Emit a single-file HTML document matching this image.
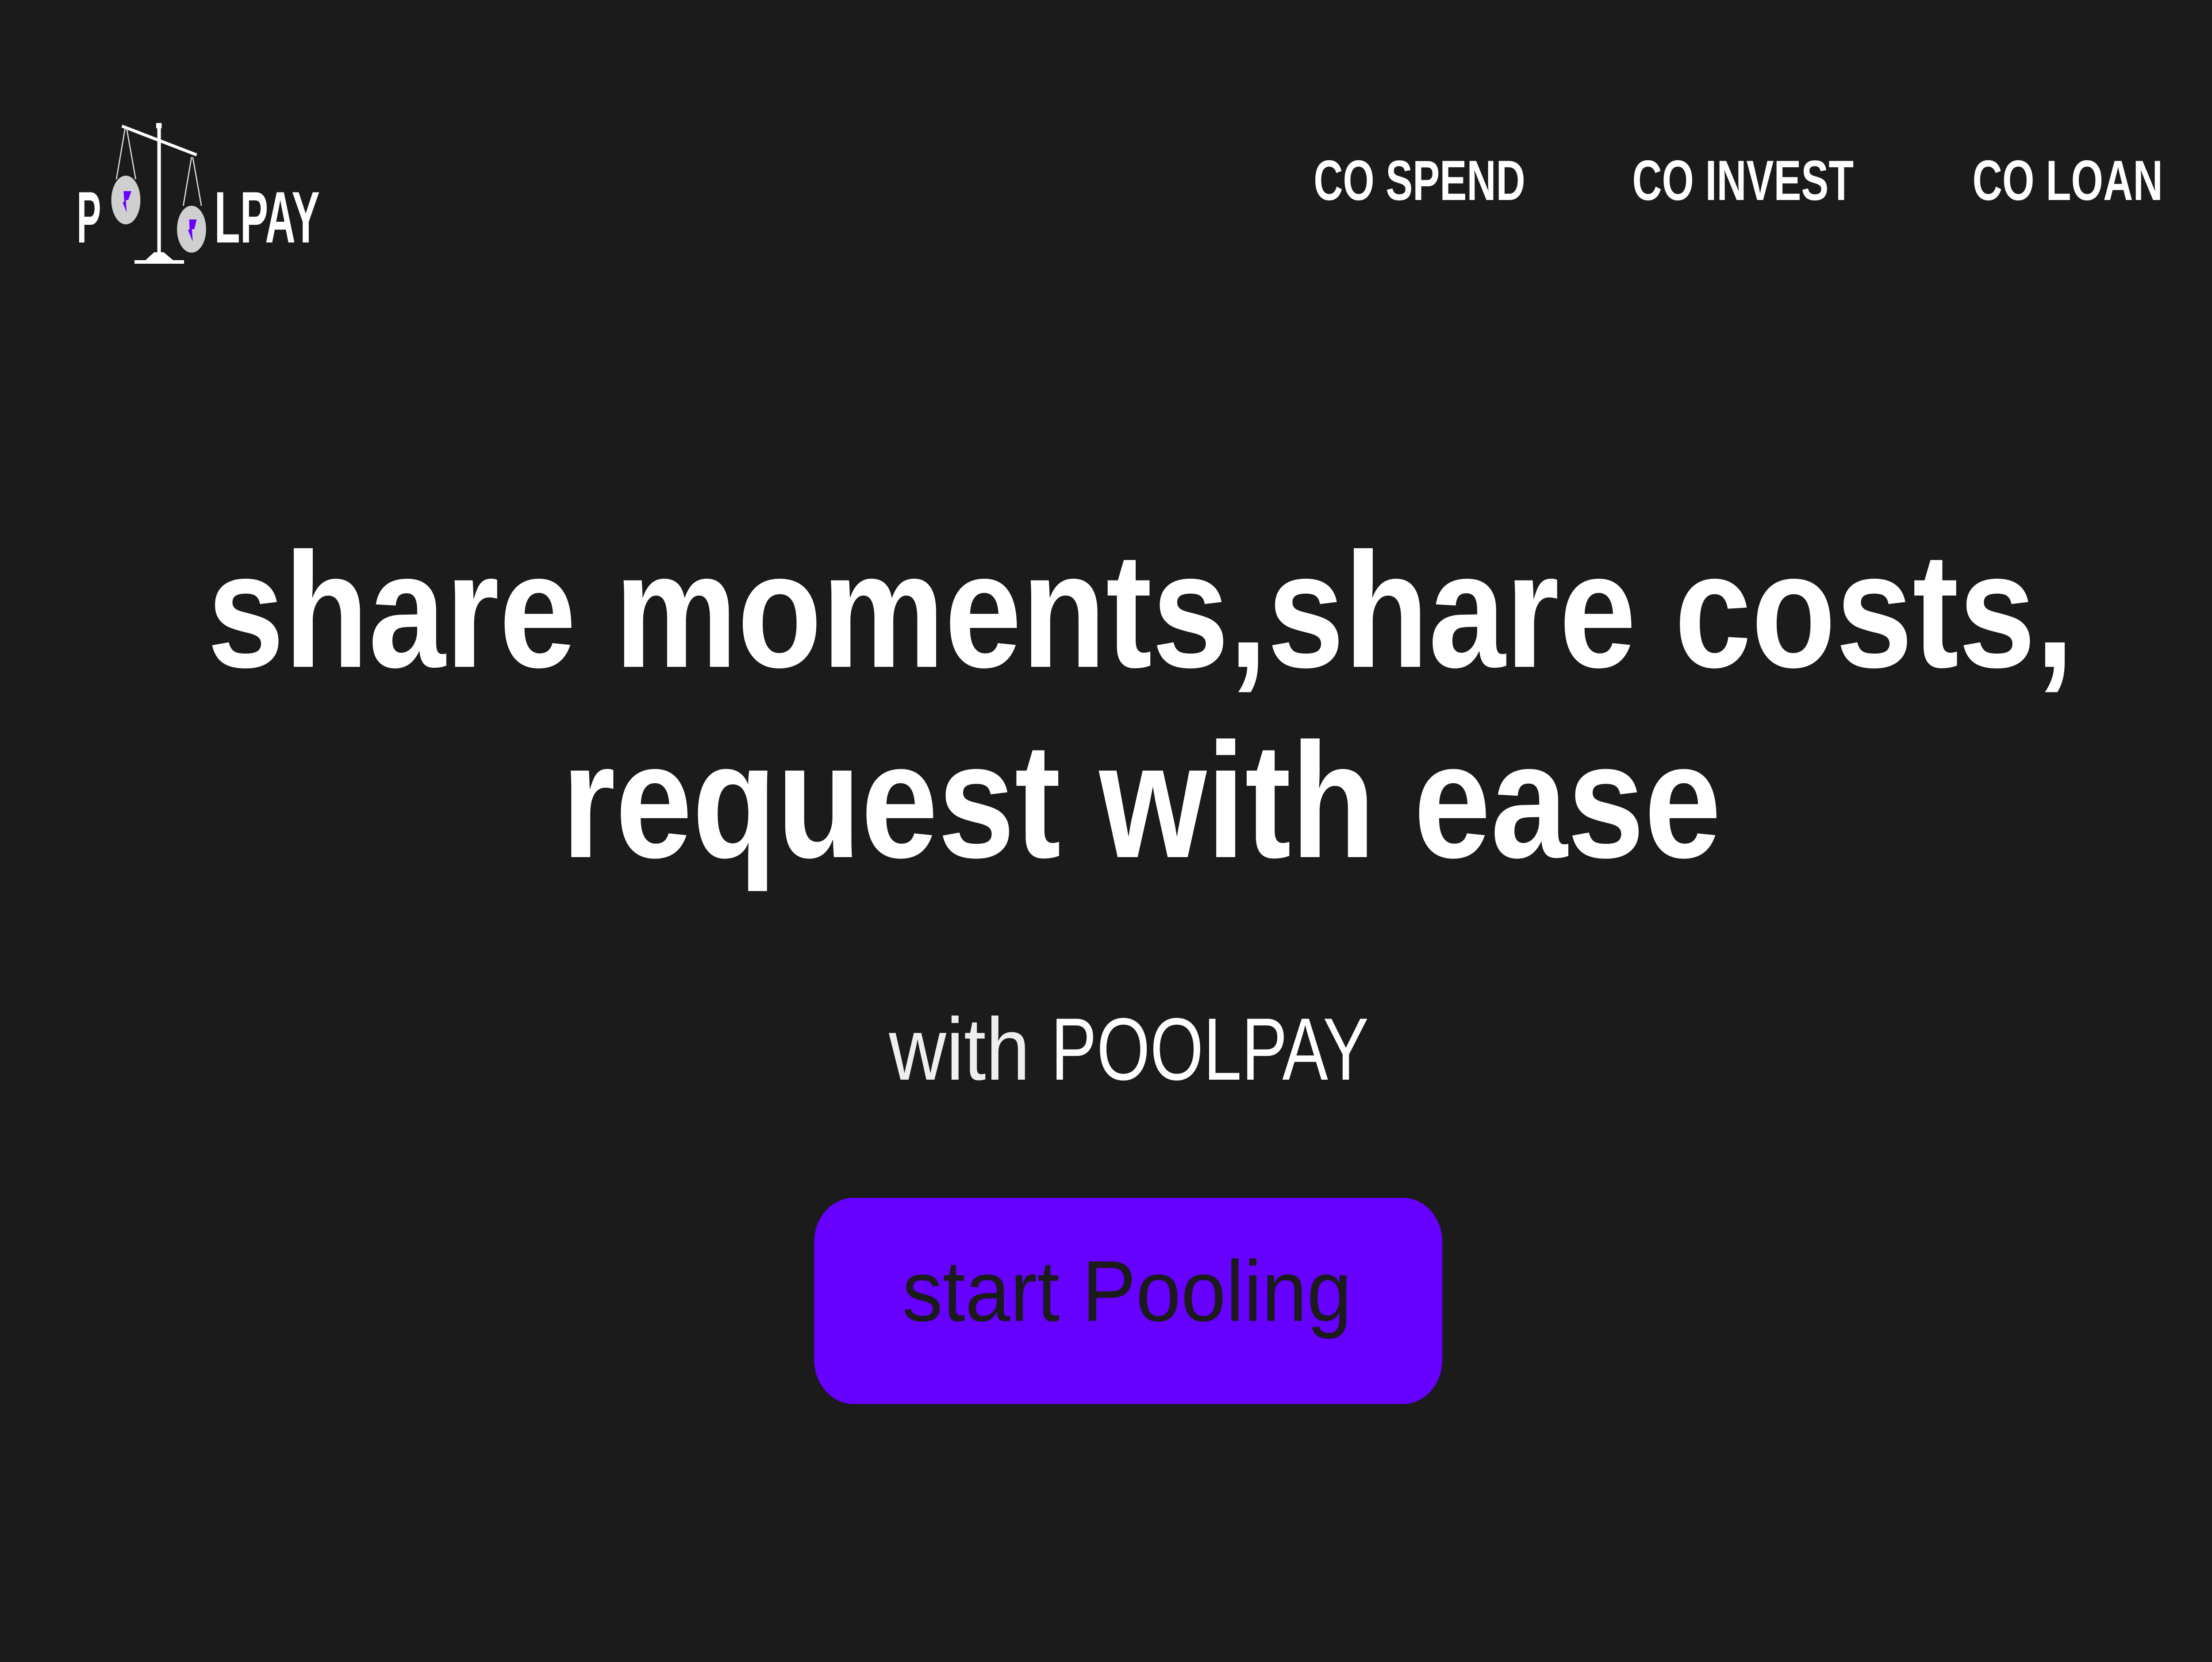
<!DOCTYPE html>
<html><head><meta charset="utf-8"><style>
html,body{margin:0;padding:0;background:#1b1b1b;overflow:hidden;width:100%;height:100%;}
svg{display:block;width:100vw;height:100vh;}
</style></head><body>
<svg viewBox="0 0 5624 3756" preserveAspectRatio="none" xmlns="http://www.w3.org/2000/svg" font-family="'Liberation Sans', sans-serif">
<rect width="5624" height="3756" fill="#1b1b1b"/>
<g fill="#fff">
<text x="195" y="548" font-size="165" font-weight="700" textLength="62" lengthAdjust="spacingAndGlyphs">P</text>
<text x="545" y="548" font-size="165" font-weight="700" textLength="268" lengthAdjust="spacingAndGlyphs">LPAY</text>
</g>
<g stroke="#ddd" fill="none">
<line x1="310" y1="285" x2="500" y2="350" stroke-width="7" stroke="#fff"/>
<line x1="318" y1="290" x2="296" y2="405" stroke-width="3"/>
<line x1="322" y1="290" x2="345" y2="405" stroke-width="3"/>
<line x1="487" y1="355" x2="466" y2="465" stroke-width="3"/>
<line x1="490" y1="355" x2="512" y2="465" stroke-width="3"/>
</g>
<rect x="400" y="282" width="9" height="300" fill="#fff"/>
<rect x="397" y="278" width="14" height="12" fill="#fff"/>
<path d="M392 570 L416 570 L440 588 L468 588 L468 596 L342 596 L342 588 L370 588 Z" fill="#fff"/>
<ellipse cx="320" cy="452" rx="37" ry="55" fill="#cfcfcf"/>
<ellipse cx="487" cy="518" rx="37" ry="53" fill="#cfcfcf"/>
<path d="M314 432 L334 432 L326 452 L320 452 L322 480 L312 458 L316 455 Z" fill="#6a00ff"/>
<path d="M481 496 L500 496 L494 518 L488 518 L490 546 L478 520 L482 518 Z" fill="#6a00ff"/>
<g fill="#fff" font-size="128" font-weight="700">
<text x="3340" y="452" textLength="538" lengthAdjust="spacingAndGlyphs">CO SPEND</text>
<text x="4150" y="452" textLength="563" lengthAdjust="spacingAndGlyphs">CO INVEST</text>
<text x="5015" y="452" textLength="484" lengthAdjust="spacingAndGlyphs">CO LOAN</text>
</g>
<g fill="#fff" font-size="370" font-weight="700">
<text x="527" y="1507" textLength="4746" lengthAdjust="spacingAndGlyphs">share moments,share costs,</text>
<text x="1428" y="1937" textLength="2948" lengthAdjust="spacingAndGlyphs">request with ease</text>
</g>
<g fill="#fff" font-size="200">
<text x="2260" y="2440" textLength="359" lengthAdjust="spacingAndGlyphs" fill="#eee">with</text>
<text x="2672" y="2440" textLength="808" lengthAdjust="spacingAndGlyphs">POOLPAY</text>
</g>
<rect x="2070" y="2707" width="1597" height="466" rx="100" ry="100" fill="#6600ff"/>
<text x="2294" y="2985" font-size="195" fill="#1b1b1b" textLength="1143" lengthAdjust="spacingAndGlyphs">start Pooling</text>
</svg>
</body></html>
